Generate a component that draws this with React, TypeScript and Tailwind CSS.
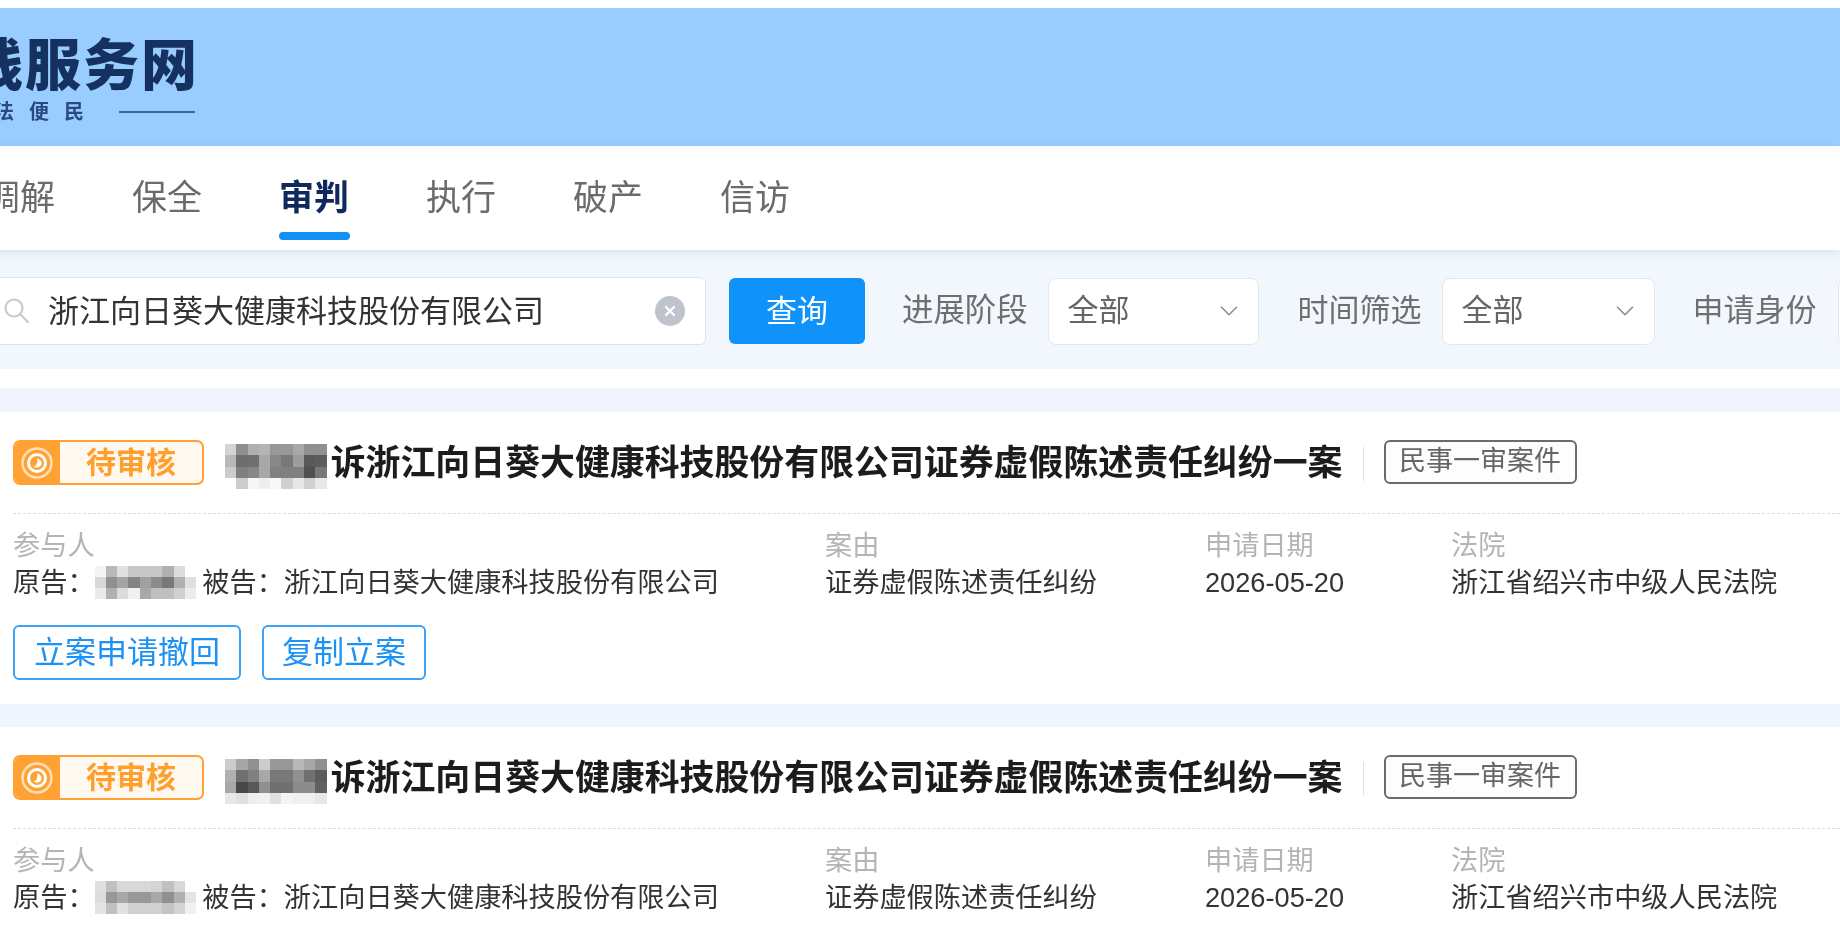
import { ChevronDown } from "lucide-react";

const TITLE_MOSAIC_1 = [
  ["d4", "8f", "b0", "b5", "98", "98", "a8", "90", "90"],
  ["b8", "6e", "70", "a8", "88", "78", "9c", "58", "5c"],
  ["cc", "80", "88", "a8", "80", "80", "80", "50", "78"],
  ["ff", "cc", "f6", "ee", "f8", "d0", "e8", "d0", "e8"],
];
const TITLE_MOSAIC_2 = [
  ["cc", "a6", "90", "cc", "98", "98", "b8", "a8", "90"],
  ["b0", "70", "80", "a8", "78", "78", "90", "70", "5c"],
  ["a8", "48", "58", "90", "70", "70", "8c", "8c", "60"],
  ["e8", "e0", "ee", "f0", "e0", "f4", "f0", "f0", "e8"],
];
const NAME_MOSAIC_1 = [
  ["f4", "b8", "e0", "c8", "c8", "c8", "b0", "dc", "ff"],
  ["d8", "90", "a4", "84", "a0", "8c", "78", "b0", "e0"],
  ["ea", "b0", "dc", "f0", "a8", "c0", "c0", "d0", "ec"],
];
const NAME_MOSAIC_2 = [
  ["e0", "c0", "d8", "d8", "d8", "d4", "c0", "d8", "ff"],
  ["dc", "98", "a8", "98", "98", "a8", "90", "b0", "e4"],
  ["e4", "c0", "e0", "d0", "d0", "d0", "c4", "d4", "f0"],
];

const NAV = ["调解", "保全", "审判", "执行", "破产", "信访"];

// pixelated name cover
function Mosaic({ rows }: { rows: string[][] }) {
  return (
    <div className="flex shrink-0 flex-col blur-[0.4px]">
      {rows.map((row, i) => (
        <div key={i} className="flex">
          {row.map((c, j) => (
            <span key={j} className="h-[11.3px] w-[11.3px]" style={{ backgroundColor: `#${c}${c}${c}` }} />
          ))}
        </div>
      ))}
    </div>
  );
}

function Pending() {
  return (
    <div className="mb-[2px] flex h-[45px] w-[191px] shrink-0 overflow-hidden rounded-[7px] border-2 border-[#ffa233] bg-[#fff9f2]">
      <div className="flex w-[45px] shrink-0 items-center justify-center bg-[#ffa233]">
        <svg width="34" height="34" viewBox="0 0 34 34" fill="none">
          <circle cx="16" cy="17" r="14.5" stroke="#ffdfb8" strokeWidth="2.5" />
          <circle cx="16" cy="17" r="8.5" stroke="#ffffff" strokeWidth="3" />
          <path d="M16 12.5c2.6 0.4 4.6 2.4 4.6 4.8 0 2.5-2 4.4-4.6 4.4-1.4 0-2.6-0.6-3.4-1.5 2.6 0 4.4-2.6 3.4-7.7z" fill="#ffffff" />
        </svg>
      </div>
      <div className="flex flex-1 items-center justify-center text-[30px] font-bold leading-none text-[#ffa02e]">待审核</div>
    </div>
  );
}

function Select({ width }: { width: string }) {
  return (
    <div className={`flex h-[67px] shrink-0 items-center justify-between rounded-[8px] border border-[#e4e7ec] bg-white pl-[19px] pr-[14px] text-[31px] text-[#666666] ${width}`}>
      <span>全部</span>
      <ChevronDown size={30} strokeWidth={1.3} className="text-[#8a8f96]" />
    </div>
  );
}

function CaseCard({ titleMosaic, nameMosaic, actions }: { titleMosaic: string[][]; nameMosaic: string[][]; actions?: boolean }) {
  return (
    <div className="bg-white pl-[13px] pt-[29px]">
      <div className="flex h-[45px] items-center">
        <Pending />
        <div className="ml-[21px] mt-[3px] self-start">
          <Mosaic rows={titleMosaic} />
        </div>
        <h3 className="ml-[4px] whitespace-nowrap text-[34.9px] font-bold leading-none text-[#1c1c1c]">
          诉浙江向日葵大健康科技股份有限公司证券虚假陈述责任纠纷一案
        </h3>
        <span className="ml-[20px] h-[34px] w-px bg-[#e2e2e2]" />
        <span className="mb-[4px] ml-[20px] flex h-[44px] w-[193px] items-center justify-center rounded-[6px] border-2 border-[#6b6b6b] bg-[#fdfdfd] text-[27px] leading-none text-[#666666]">
          民事一审案件
        </span>
      </div>
      <div className="mt-[27px] border-t border-dashed border-[#dcdcdc] pt-[13px]">
        <div className="grid grid-cols-[812px_380px_246px_1fr] text-[27.2px] leading-[37px]">
          <span className="text-[#b4b4b4]">参与人</span>
          <span className="text-[#b4b4b4]">案由</span>
          <span className="text-[#b4b4b4]">申请日期</span>
          <span className="text-[#b4b4b4]">法院</span>
          <div className="flex items-center text-[#333333]">
            <span>原告：</span>
            <Mosaic rows={nameMosaic} />
            <span className="ml-[6px] whitespace-nowrap">被告：浙江向日葵大健康科技股份有限公司</span>
          </div>
          <span className="text-[#333333]">证券虚假陈述责任纠纷</span>
          <span className="text-[#333333]">2026-05-20</span>
          <span className="whitespace-nowrap text-[#333333]">浙江省绍兴市中级人民法院</span>
        </div>
        {actions && (
          <div className="mt-[24px] flex gap-[21px] pb-[24px]">
            <button className="h-[55px] w-[228px] rounded-[6px] border-2 border-[#3da1f5] bg-white text-[31px] leading-none text-[#1d92f5]">立案申请撤回</button>
            <button className="h-[55px] w-[164px] rounded-[6px] border-2 border-[#3da1f5] bg-white text-[31px] leading-none text-[#1d92f5]">复制立案</button>
          </div>
        )}
      </div>
    </div>
  );
}

export default function App() {
  return (
    <div className="h-[939px] w-[1840px] overflow-hidden bg-white pt-2 font-['Liberation_Sans','Noto_Sans_CJK_SC',sans-serif] blur-[0.6px]">
      {/* header */}
      <header className="h-[138px] bg-[#99ccff]">
        <div className="flex w-[197px] flex-col items-end overflow-hidden pt-[24px]">
          <div className="-mr-[2px] whitespace-nowrap text-[56px] font-black leading-[68px] tracking-[2px] text-[#15315f]">线服务网</div>
          <div className="flex w-[197px] items-center justify-end text-[20px] font-bold leading-[24px] text-[#2b4b80]">
            <span className="whitespace-nowrap tracking-[15px]">法便民</span>
            <span className="ml-[20px] mr-[2px] h-[2px] w-[76px] shrink-0 bg-[#3f6498]" />
          </div>
        </div>
      </header>

      {/* nav */}
      <nav className="relative z-10 -ml-[15px] flex h-[104px] gap-[77px] bg-white shadow-[0_3px_8px_rgba(90,120,170,0.14)]">
        {NAV.map((item) => (
          <div key={item} className={`relative flex items-center text-[35px] ${item === "审判" ? "font-bold text-[#10295c]" : "text-[#6b6b6b]"}`}>
            {item}
            {item === "审判" && <span className="absolute bottom-[10px] left-0 h-2 w-[71px] rounded-full bg-[#1390f5]" />}
          </div>
        ))}
      </nav>

      {/* filters */}
      <div className="flex h-[119px] items-center bg-[#f2f6fd] pt-[3px]">
        <div className="-ml-[10px] flex h-[68px] w-[716px] shrink-0 items-center rounded-[6px] border border-[#dfe2e7] bg-white pl-[12px] pr-[20px] text-[31px] text-[#333333]">
          <svg width="28" height="28" viewBox="0 0 28 28" fill="none" className="shrink-0" stroke="#c6cad1" strokeWidth="2.2">
            <circle cx="11" cy="11" r="8.5" />
            <path d="M17.5 17.5L25 25" strokeLinecap="round" />
          </svg>
          <span className="ml-[17px] flex-1 whitespace-nowrap leading-none">浙江向日葵大健康科技股份有限公司</span>
          <span className="flex h-[30px] w-[30px] shrink-0 items-center justify-center rounded-full bg-[#bfc3cb]">
            <svg width="14" height="14" viewBox="0 0 14 14" stroke="#ffffff" strokeWidth="2.2" strokeLinecap="round">
              <path d="M3 3l8 8M11 3l-8 8" />
            </svg>
          </span>
        </div>
        <button className="ml-[23px] h-[66px] w-[136px] shrink-0 rounded-[6px] bg-[#0f93fb] text-[31px] leading-none text-white">查询</button>
        <span className="ml-[37px] shrink-0 whitespace-nowrap text-[31.4px] text-[#6f6f6f]">进展阶段</span>
        <div className="ml-[20px]"><Select width="w-[211px]" /></div>
        <span className="ml-[39px] shrink-0 whitespace-nowrap text-[31px] text-[#6f6f6f]">时间筛选</span>
        <div className="ml-[20px]"><Select width="w-[213px]" /></div>
        <span className="ml-[38px] shrink-0 whitespace-nowrap text-[31px] text-[#6f6f6f]">申请身份</span>
        <div className="ml-[21px]"><Select width="w-[213px]" /></div>
      </div>

      <div className="h-[19px] bg-white" />
      <div className="h-[24px] bg-[#eff4fd]" />
      <CaseCard titleMosaic={TITLE_MOSAIC_1} nameMosaic={NAME_MOSAIC_1} actions />
      <div className="h-[23px] bg-[#eff4fd]" />
      <CaseCard titleMosaic={TITLE_MOSAIC_2} nameMosaic={NAME_MOSAIC_2} />
    </div>
  );
}
